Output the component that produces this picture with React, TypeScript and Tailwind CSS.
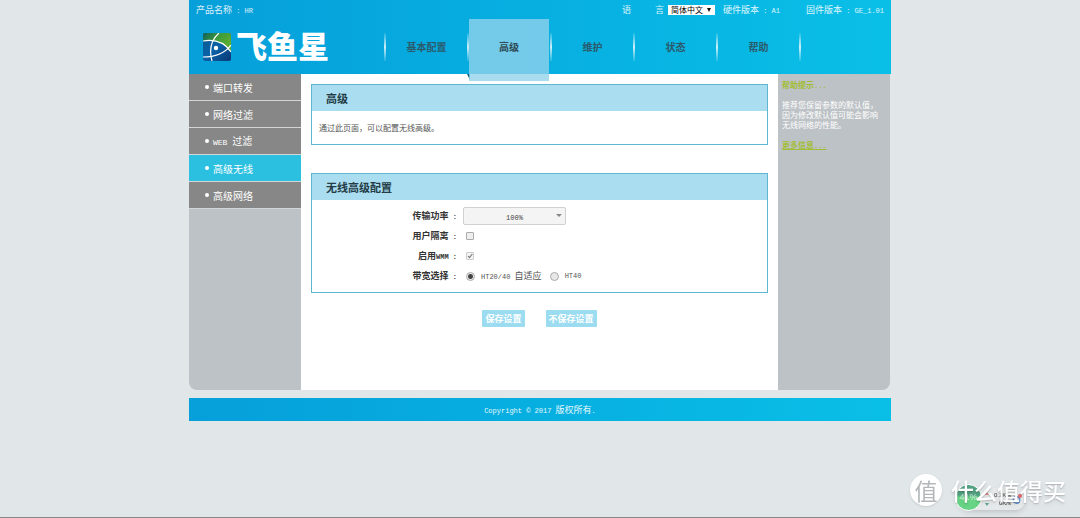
import type { ReactNode } from "react";

const NAV_ITEMS = ["基本配置", "高级", "维护", "状态", "帮助"];

const SIDE_ITEMS = [
  { label: "端口转发" },
  { label: "网络过滤" },
  { label: "过滤", prefix: "WEB " },
  { label: "高级无线", active: true },
  { label: "高级网络" },
];

function Latin({ children }: { children: string }) {
  return (
    <span className="font-['Liberation_Mono',monospace] text-[7px] whitespace-pre">
      {children}
    </span>
  );
}

function Logo() {
  return (
    <a href="#" className="flex w-[182px] shrink-0 items-center gap-[5px] pl-3.5 text-white">
      <svg className="size-7 shrink-0" viewBox="0 0 28 28" aria-hidden="true">
        <defs>
          <linearGradient id="sea" x1="0" y1="0" x2="1" y2="1">
            <stop offset="0" stopColor="#0b5a8c" />
            <stop offset="0.5" stopColor="#0a62a8" />
            <stop offset="1" stopColor="#0b3872" />
          </linearGradient>
          <linearGradient id="leaf" x1="0" y1="0" x2="1" y2="0.6">
            <stop offset="0" stopColor="#12605c" />
            <stop offset="0.5" stopColor="#3f9c3c" />
            <stop offset="1" stopColor="#5fae2e" />
          </linearGradient>
        </defs>
        <rect width="28" height="28" rx="2" fill="url(#sea)" />
        <path d="M0 8C12 6 22 10 28 19V2a2 2 0 0 0-2-2H2a2 2 0 0 0-2 2z" fill="url(#leaf)" />
        <g fill="none" stroke="#fff" strokeWidth="1.2">
          <path d="M0 8C12 6 22 10 28 19" />
          <path d="M16 0C8 7 6 17 9 28" />
          <path d="M0 24C12 24 22 20 28 12" />
        </g>
        <circle cx="13" cy="15" r="2.2" fill="#fff" />
      </svg>
      <span className="pb-1 text-[31px] leading-8 font-black whitespace-nowrap">飞鱼星</span>
    </a>
  );
}

function Divider() {
  return (
    <span className="h-7 w-0.5 shrink-0 bg-linear-to-b from-white/10 via-white/80 to-white/10" />
  );
}

function Panel({ title, children }: { title: string; children: ReactNode }) {
  return (
    <section className="border border-[#5fb6cf]">
      <h2 className="bg-[#aaddf0] pl-3.5 text-[11px] leading-[26px] font-bold text-[#243c46]">
        {title}
      </h2>
      {children}
    </section>
  );
}

function Header() {
  return (
    <header className="flex h-[74px] flex-col bg-linear-to-r from-[#069fda] to-[#0abfe7]">
      <div className="flex h-[19px] shrink-0 items-center pr-[7px] pl-[7px] text-[9px] text-white/85">
        <span>
          产品名称<Latin>{" : HR"}</Latin>
        </span>
        <label htmlFor="language" className="ml-auto flex w-[42px] justify-between">
          <span>语</span>
          <span>言</span>
        </label>
        <span className="relative mr-2 ml-1 flex">
          <select
            id="language"
            className="h-2.5 w-[47px] appearance-none bg-white pl-[3px] text-[8px] leading-[10px] text-black"
          >
            <option>简体中文</option>
          </select>
          <svg className="pointer-events-none absolute top-[3px] right-1 size-1" viewBox="0 0 4 4">
            <path d="M0 0h4L2 4z" fill="#111" />
          </svg>
        </span>
        <span className="mr-[26px]">
          硬件版本<Latin>{" : A1"}</Latin>
        </span>
        <span>
          固件版本<Latin>{" : GE_1.01"}</Latin>
        </span>
      </div>
      <div className="flex h-[55px]">
        <Logo />
        <nav className="ml-[13px] flex h-[55px] items-center">
          <Divider />
          {NAV_ITEMS.map((item) => (
            <div key={item} className="flex items-center">
              {item === "高级" ? (
                <div className="relative h-[55px] w-[81px]">
                  <svg className="absolute top-[55px] -left-0.5 h-1.5 w-[3px]" viewBox="0 0 3 6">
                    <path d="M0 0h3v6z" fill="#075f7c" />
                  </svg>
                  <a
                    href="#"
                    aria-current="page"
                    className="absolute inset-x-0 top-0 mr-px flex h-[62px] items-center justify-center bg-[#92d2ec]/78 pb-[7px] text-[10px] font-bold text-[#2f4a55]"
                  >
                    {item}
                  </a>
                </div>
              ) : (
                <a
                  href="#"
                  className="w-[81px] text-center text-[10px] font-bold text-[#2b5a6c]"
                >
                  {item}
                </a>
              )}
              <Divider />
            </div>
          ))}
        </nav>
      </div>
    </header>
  );
}

function Sidebar() {
  return (
    <aside className="w-28 shrink-0 rounded-bl-lg bg-[#bdc2c6]">
      <ul>
        {SIDE_ITEMS.map((item) => (
          <li key={item.label} className="border-b border-[#d3d5d6]">
            <a
              href="#"
              className={`flex h-[26px] items-center pl-4 text-[10px] text-white ${
                item.active ? "bg-[#2bbfe0]" : "bg-[#878787]"
              }`}
            >
              <span className="mr-1 size-1 rounded-full bg-white" />
              <span>
                {item.prefix && (
                  <span className="font-['Liberation_Mono',monospace] text-[8px] whitespace-pre">
                    {item.prefix}
                  </span>
                )}
                {item.label}
              </span>
            </a>
          </li>
        ))}
      </ul>
    </aside>
  );
}

function WirelessForm() {
  return (
    <form>
      <Panel title="无线高级配置">
        <div className="grid auto-rows-[20px] grid-cols-[145px_1fr] gap-x-1.5 py-1.5 text-[9px] leading-5 text-[#555]">
          <label htmlFor="power" className="text-right font-bold text-[#333]">
            传输功率<Latin>{" :"}</Latin>
          </label>
          <span className="relative flex w-[103px] items-center">
            <select
              id="power"
              className="h-[18px] w-full appearance-none rounded-xs border border-[#d0d0d0] bg-[#f4f4f4] text-center font-['Liberation_Mono',monospace] text-[7px] text-[#444]"
            >
              <option>100%</option>
            </select>
            <svg className="pointer-events-none absolute top-2 right-1 h-[3px] w-1.5" viewBox="0 0 6 3">
              <path d="M0 0h6L3 3z" fill="#888" />
            </svg>
          </span>

          <label htmlFor="isolation" className="text-right font-bold text-[#333]">
            用户隔离<Latin>{" :"}</Latin>
          </label>
          <span className="flex items-center pl-[3px]">
            <input
              id="isolation"
              type="checkbox"
              className="size-2 appearance-none rounded-[1px] border border-[#aaa] bg-[#eee]"
            />
          </span>

          <label htmlFor="wmm" className="text-right font-bold text-[#333]">
            启用<Latin>{"WMM :"}</Latin>
          </label>
          <span className="flex items-center pl-[3px]">
            <span className="relative flex">
              <input
                id="wmm"
                type="checkbox"
                defaultChecked
                disabled
                className="size-2 appearance-none rounded-[1px] border border-[#ccc] bg-[#f4f4f4]"
              />
              <svg className="pointer-events-none absolute inset-0 size-2" viewBox="0 0 8 8">
                <path d="M2 4l1.5 1.7L6.3 2" fill="none" stroke="#777" strokeWidth="1.1" />
              </svg>
            </span>
          </span>

          <span id="bandwidth" className="text-right font-bold text-[#333]">
            带宽选择<Latin>{" :"}</Latin>
          </span>
          <div role="radiogroup" aria-labelledby="bandwidth" className="flex items-center gap-2 pl-[3px]">
            <label className="flex items-center gap-1.5">
              <input
                type="radio"
                name="bandwidth"
                defaultChecked
                className="size-[9px] appearance-none rounded-full border border-[#aaa] bg-[radial-gradient(circle,#444_2px,#eee_3px)]"
              />
              <span>
                <Latin>{"HT20/40 "}</Latin>自适应
              </span>
            </label>
            <label className="flex items-center gap-1.5">
              <input
                type="radio"
                name="bandwidth"
                className="size-[9px] appearance-none rounded-full border border-[#aaa] bg-[#e8e8e8]"
              />
              <Latin>HT40</Latin>
            </label>
          </div>
        </div>
      </Panel>
      <div className="mt-[17px] flex justify-center gap-[21px] text-[9px] leading-[17px] font-bold text-white">
        <button type="submit" className="rounded-[1px] bg-[#9bdcf0] px-[3px]">
          保存设置
        </button>
        <button type="reset" className="rounded-[1px] bg-[#9bdcf0] px-[3px]">
          不保存设置
        </button>
      </div>
    </form>
  );
}

function Tips() {
  return (
    <aside className="mr-px w-28 shrink-0 rounded-br-lg bg-[#bdc2c6] pt-1.5 pl-1 text-[8px] leading-[10px] text-white">
      <h3 className="h-2.5 font-bold text-[#a3bd35]">
        帮助提示<Latin>...</Latin>
      </h3>
      <p className="mt-2.5">
        推荐您保留参数的默认值，
        <br />
        因为修改默认值可能会影响
        <br />
        无线网络的性能。
      </p>
      <a href="#" className="mt-2.5 block font-bold text-[#a3bd35] underline">
        更多信息<Latin>...</Latin>
      </a>
    </aside>
  );
}

/* Speed widget with the site watermark lying over it */
function Watermark() {
  return (
    <div className="fixed right-0 bottom-0 h-12 w-[180px]">
      <div className="absolute right-[54px] bottom-2 flex h-[22px] w-[68px] items-center justify-end gap-px rounded-full bg-[#e6e9ea] pr-1 shadow-md">
        <svg className="mr-1 h-3.5 w-1" viewBox="0 0 4 14">
          <path d="M2 0l2 3H0z" fill="#d88" />
          <path d="M2 14l2-3H0z" fill="#5ba58c" />
        </svg>
        <div className="text-right font-['Liberation_Sans',sans-serif] text-[6px] leading-2 text-[#333]">
          0.1K/s
          <br />
          0K/s
        </div>
        <svg className="size-2.5" viewBox="0 0 10 10">
          <circle cx="4.5" cy="6" r="3.2" fill="none" stroke="#5b8fd0" strokeWidth="1.4" />
          <circle cx="8" cy="2" r="2" fill="#e26a6a" />
        </svg>
      </div>
      <div className="absolute bottom-[7px] left-[55px] flex size-[27px] items-center justify-center rounded-full border border-white bg-linear-to-b from-[#53a383] from-40% to-[#68d486] to-50% font-['Liberation_Sans',sans-serif] text-[9px] text-white/70">
        41%
      </div>
      <div className="absolute inset-x-0 top-1 flex items-center pl-2.5 text-white">
        <span className="mr-[9px] flex size-8 items-center justify-center rounded-full bg-white text-[23px] leading-8 text-[#b3b7b9] shadow-sm">
          值
        </span>
        <span className="text-[23px] leading-8 font-medium whitespace-nowrap text-shadow-md">
          什么值得买
        </span>
      </div>
    </div>
  );
}

export default function App() {
  return (
    <div className="min-h-screen border-b border-[#888] bg-[#e1e6e9] font-['Noto_Sans_CJK_SC',sans-serif]">
      <div className="mx-auto max-w-[702px]">
        <Header />
        <div className="flex min-h-[316px]">
          <Sidebar />
          <main className="flex flex-1 flex-col gap-7 bg-white px-2.5 pt-2.5">
            <Panel title="高级">
              <p className="px-[7px] py-[11px] text-[8px] leading-[11px] text-[#555]">
                通过此页面，可以配置无线高级。
              </p>
            </Panel>
            <WirelessForm />
          </main>
          <Tips />
        </div>
        <footer className="mt-2 flex h-[23px] items-center justify-center bg-linear-to-r from-[#069fda] to-[#0abfe7] text-[9px] text-white/90">
          <p>
            <Latin>{"Copyright © 2017 "}</Latin>版权所有<Latin>.</Latin>
          </p>
        </footer>
      </div>
      <Watermark />
    </div>
  );
}
